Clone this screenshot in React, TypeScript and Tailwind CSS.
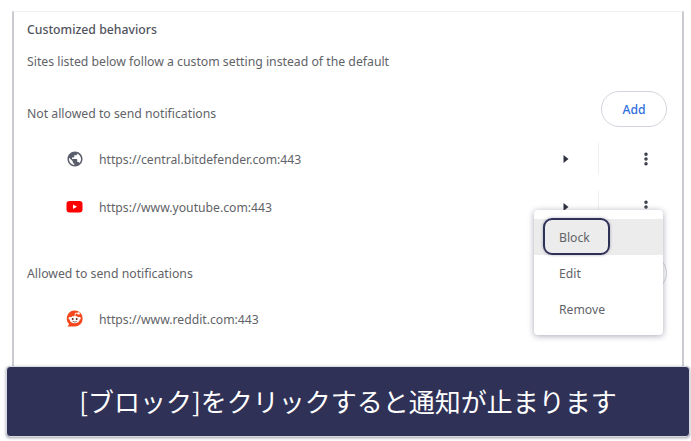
import { MoreVertical } from "lucide-react"

const Globe = () => (
  <svg width="18" height="18" viewBox="0 0 24 24" fill="#5a5e6b">
    <path d="M12 2C6.48 2 2 6.48 2 12s4.48 10 10 10 10-4.48 10-10S17.52 2 12 2zm-1 17.93c-3.95-.49-7-3.85-7-7.93 0-.62.08-1.21.21-1.79L9 15v1c0 1.1.9 2 2 2v1.93zm6.9-2.54c-.26-.81-1-1.39-1.9-1.39h-1v-3c0-.55-.45-1-1-1H8v-2h2c.55 0 1-.45 1-1V7h2c1.1 0 2-.9 2-2v-.41c2.93 1.19 5 4.06 5 7.41 0 2.08-.8 3.97-2.1 5.39z" />
  </svg>
)

const Youtube = () => (
  <svg width="18" height="18" viewBox="0 0 18 18">
    <rect x="0.5" y="3" width="16" height="11.5" rx="3" fill="#f00" />
    <path d="M7 6.5 L11 8.75 L7 11 Z" fill="#fff" />
  </svg>
)

const Reddit = () => (
  <svg width="18" height="18" viewBox="0 0 18 18">
    <path d="M8.7 0.5a8 8 0 1 1 0 16H1.6l1.5-2.4A8 8 0 0 1 8.7 0.5z" fill="#f4471c" />
    <ellipse cx="8.7" cy="9.6" rx="5" ry="3.6" fill="#fff" />
    <circle cx="3.9" cy="8.2" r="1.2" fill="#fff" />
    <circle cx="13.5" cy="8.2" r="1.2" fill="#fff" />
    <circle cx="12.6" cy="3.4" r="1.2" fill="#fff" />
    <path d="M8.8 6.2 L9.6 3 L12.4 3.4" stroke="#fff" strokeWidth="0.8" fill="none" />
    <circle cx="6.7" cy="9" r="1" fill="#5b2a1c" />
    <circle cx="10.7" cy="9" r="1" fill="#5b2a1c" />
    <path d="M6.6 11.3 Q8.7 12.7 10.8 11.3" stroke="#5b2a1c" strokeWidth="0.7" fill="none" />
  </svg>
)

const Row = ({ icon, url }: { icon: React.ReactNode; url: string }) => (
  <div className="flex h-[32px] items-center">
    <div className="ml-[39px] flex w-[33px] shrink-0 justify-start">{icon}</div>
    <span className="pt-[2px] text-[12.2px] text-[#5f6368]">{url}</span>
  </div>
)

const Actions = () => (
  <div className="flex h-[32px] items-center">
    <svg width="6" height="8" viewBox="0 0 6 8" className="ml-[549px]">
      <path d="M0.5 0 L5.5 4 L0.5 8 Z" fill="#2f3140" />
    </svg>
    <div className="ml-[29px] h-full w-px bg-[#eeeeee]" />
    <MoreVertical size={16} strokeWidth={3.2} className="ml-[39px] text-[#2f3140]" />
  </div>
)

const App = () => {
  return (
    <div className="relative h-[441px] w-[691px] overflow-hidden bg-white font-['Noto_Sans','Noto_Sans_CJK_JP',sans-serif]">
      <div className="mx-[12px] h-[420px] w-[672px] translate-y-[11px] border-x-2 border-t border-x-[#c9cad2] border-t-[#f1f1f3] bg-white pl-[13px]">
        <p className="mt-[9px] text-[12.25px] leading-[18px] font-medium text-[#50535c]">Customized behaviors</p>
        <p className="mt-[14px] text-[12.25px] leading-[18px] text-[#5f6368]">Sites listed below follow a custom setting instead of the default</p>

        <div className="mt-[20px] flex h-[36px] items-center justify-between pr-[15px]">
          <span className="pt-[10px] text-[12.25px] text-[#5f6368]">Not allowed to send notifications</span>
          <button className="h-[36px] w-[66px] rounded-full border border-[#d3d5dc] pt-[2px] text-[12.2px] font-medium text-[#2f6fdc]">Add</button>
        </div>

        <div className="relative mt-[16px]">
          <Row icon={<Globe />} url="https://central.bitdefender.com:443" />
          <div className="absolute top-0 left-[-13px]"><Actions /></div>
        </div>
        <div className="relative mt-[16px]">
          <Row icon={<Youtube />} url="https://www.youtube.com:443" />
          <div className="absolute top-0 left-[-13px]"><Actions /></div>
        </div>

        <div className="mt-[32px] flex h-[36px] items-center justify-between pr-[15px]">
          <span className="pt-[2px] text-[12.25px] text-[#5f6368]">Allowed to send notifications</span>
          <button className="h-[36px] w-[66px] rounded-full border border-[#d3d5dc] text-[12.2px] font-medium text-[#2f6fdc]">Add</button>
        </div>

        <div className="mt-[12px]">
          <Row icon={<Reddit />} url="https://www.reddit.com:443" />
        </div>
      </div>

      <div className="absolute top-[210px] left-[534px] h-[125px] w-[129px] rounded-[4px] bg-white pt-[9px] shadow-[0_1px_6px_rgba(60,64,90,0.45)]">
        <div className="flex h-[36px] items-center bg-[#ececec] pt-[2px] pl-[25px] text-[12.2px] text-[#5f6368]">Block</div>
        <div className="flex h-[36px] items-center pt-[2px] pl-[25px] text-[12.2px] text-[#5f6368]">Edit</div>
        <div className="flex h-[36px] items-center pt-[2px] pl-[25px] text-[12.2px] text-[#5f6368]">Remove</div>
        <div className="absolute top-[8px] left-[9px] h-[37px] w-[67px] rounded-[9px] border-2 border-[#2f3157] shadow-[0_0_3px_rgba(47,49,87,0.4)]" />
      </div>

      <div className="absolute top-[366px] left-[6px] flex h-[71px] w-[684px] items-center justify-center rounded-[4px] border border-[#d9dae0] bg-[#2f3157] pb-[2px] font-['Noto_Sans_CJK_JP',sans-serif] text-[26px] font-normal text-white shadow-[0_1px_3px_rgba(60,64,90,0.5)]">
        [ブロック]をクリックすると通知が止まります
      </div>
    </div>
  )
}

export default App
